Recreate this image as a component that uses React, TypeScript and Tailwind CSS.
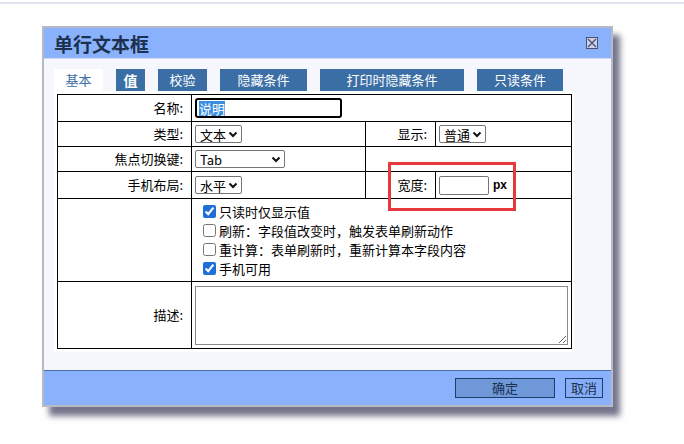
import React from 'react';

const font = { fontFamily: '"Noto Sans CJK SC", "Noto Sans", sans-serif' };

const Chevron = () => (
  <svg width="10" height="7" viewBox="0 0 10 7" className="shrink-0">
    <path d="M1.5 1.5l3.5 3.5 3.5-3.5" fill="none" stroke="#111" strokeWidth="2" />
  </svg>
);

const FakeSelect = ({ value, className }: { value: string; className: string }) => (
  <div
    className={`flex h-[18px] items-center justify-between rounded-[2px] border border-[#767676] bg-white pl-[4px] pr-[3px] text-[13px] leading-none text-black ${className}`}
  >
    <span>{value}</span>
    <Chevron />
  </div>
);

const Check = ({ checked, label }: { checked: boolean; label: string }) => (
  <label className="flex h-[19px] items-center gap-[3px] text-[13px] text-black">
    <input type="checkbox" defaultChecked={checked} className="m-0 h-[13px] w-[13px] accent-[#1f6fd6]" />
    <span>{label}</span>
  </label>
);

const tabs = [
  { name: '值', w: 'w-[29px]', cls: 'text-[14px] font-bold' },
  { name: '校验', w: 'w-[49px]', cls: 'text-[13px]' },
  { name: '隐藏条件', w: 'w-[87px]', cls: 'text-[13px]' },
  { name: '打印时隐藏条件', w: 'w-[144px]', cls: 'text-[13px]' },
  { name: '只读条件', w: 'w-[86px]', cls: 'text-[13px]' },
];

const td = 'border border-black p-0';
const labelTd = `${td} pr-[8px] text-right align-middle text-[13px] text-black`;

export default function App() {
  return (
    <div className="relative h-[444px] w-[684px] bg-white" style={font}>
      <div className="h-[4px] border-b-2 border-[#dfe5f0] bg-white" />

      {/* dialog */}
      <div className="ml-[42px] mt-[22px] w-[571px] border-2 border-[#b8b9c6] shadow-[7px_9px_6px_rgba(70,70,100,0.75)]">
        <div className="flex h-[31px] items-center justify-between border-b border-[#cfdaf0] bg-[#8ab2fc] pl-[10px] pr-[13px]">
          <span className="text-[19px] font-bold leading-none text-[#1c3150]">单行文本框</span>
          <div className="flex h-[12px] w-[12px] items-center justify-center border border-[#4e4e6e] bg-[#c9d3ee]">
            <svg width="10" height="10" viewBox="0 0 10 10">
              <path d="M1 1l8 8M9 1l-8 8" stroke="#4e4e6e" strokeWidth="1.3" />
            </svg>
          </div>
        </div>

        <div className="bg-[#f5f7fc] px-[10px] pb-[18px] pt-[10px]">
          <div className="flex h-[22px] items-stretch gap-[13px]">
            <div className="flex w-[49px] items-center justify-center bg-white text-[13px] text-[#3a6ea5]">基本</div>
            {tabs.map((t) => (
              <div key={t.name} className={`flex ${t.w} items-center justify-center bg-[#3b6ea5] text-white ${t.cls}`}>
                {t.name}
              </div>
            ))}
          </div>

          <div className="w-[520px] bg-white p-[3px]">
            <table className="w-[514px] table-fixed border-collapse">
              <colgroup>
                <col className="w-[134px]" />
                <col className="w-[174px]" />
                <col className="w-[70px]" />
                <col className="w-[136px]" />
              </colgroup>
              <tbody>
                <tr className="h-[27px]">
                  <td className={labelTd}>名称:</td>
                  <td className={`${td} pl-[3px]`} colSpan={3}>
                    <div className="flex h-[20px] w-[147px] items-center rounded-[3px] border-2 border-black px-[2px] text-[13px]">
                      <span className="bg-[#3b8de0] leading-[15px] text-white">说明</span>
                    </div>
                  </td>
                </tr>
                <tr className="h-[25px]">
                  <td className={labelTd}>类型:</td>
                  <td className={`${td} pl-[3px]`}>
                    <FakeSelect value="文本" className="w-[47px]" />
                  </td>
                  <td className={labelTd}>显示:</td>
                  <td className={`${td} pl-[3px]`}>
                    <FakeSelect value="普通" className="w-[47px]" />
                  </td>
                </tr>
                <tr className="h-[25px]">
                  <td className={labelTd}>焦点切换键:</td>
                  <td className={`${td} pl-[3px]`}>
                    <FakeSelect value="Tab" className="w-[90px]" />
                  </td>
                  <td className={td} colSpan={2} />
                </tr>
                <tr className="h-[27px]">
                  <td className={labelTd}>手机布局:</td>
                  <td className={`${td} pl-[3px]`}>
                    <FakeSelect value="水平" className="w-[47px]" />
                  </td>
                  <td className={labelTd}>宽度:</td>
                  <td className={`${td} pl-[3px]`}>
                    <div className="flex items-center gap-[4px]">
                      <input className="h-[19px] w-[50px] rounded-[2px] border border-[#767676] bg-white" />
                      <span className="text-[12px] font-bold leading-none text-black" style={{ fontFamily: '"Liberation Sans", sans-serif' }}>px</span>
                    </div>
                  </td>
                </tr>
                <tr className="h-[83px]">
                  <td className={td} />
                  <td className={`${td} pl-[11px] align-middle`} colSpan={3}>
                    <div className="flex flex-col">
                      <Check checked label="只读时仅显示值" />
                      <Check checked={false} label="刷新：字段值改变时，触发表单刷新动作" />
                      <Check checked={false} label="重计算：表单刷新时，重新计算本字段内容" />
                      <Check checked label="手机可用" />
                    </div>
                  </td>
                </tr>
                <tr className="h-[67px]">
                  <td className={labelTd}>描述:</td>
                  <td className={`${td} px-[3px] py-[3px]`} colSpan={3}>
                    <textarea className="block h-[59px] w-[373px] border border-[#8a8a8a] bg-white" />
                  </td>
                </tr>
              </tbody>
            </table>
          </div>
        </div>

        <div className="flex h-[35px] items-center justify-end gap-[10px] border-t border-[#4b6ea8] bg-[#8ab2fc] pr-[8px]">
          <div className="flex h-[20px] w-[100px] items-center justify-center border border-[#1f3d6b] bg-[#6e98d8] text-[13px] text-[#1c2f4f]">
            确定
          </div>
          <div className="flex h-[20px] w-[38px] items-center justify-center border border-[#1f3d6b] bg-[#86aef6] text-[13px] text-[#1c2f4f]">
            取消
          </div>
        </div>
      </div>

      {/* annotation box */}
      <div className="absolute left-[388px] top-[162px] h-[49px] w-[128px] border-[3px] border-[#e8393d]" />
    </div>
  );
}
